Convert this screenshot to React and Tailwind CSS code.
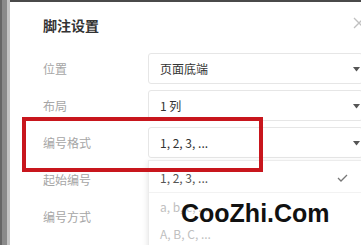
const ROWS = [
  { label: '位置', value: '页面底端' },
  { label: '布局', value: '1 列' },
  { label: '编号格式', value: '1, 2, 3, ...' },
]

function Caret() {
  return (
    <svg width="7" height="5" viewBox="0 0 7 5" className="absolute left-[204px] top-[13px]">
      <path d="M0 0 L7 0 L3.5 4.5 Z" fill="#555" />
    </svg>
  )
}

export default function App() {
  return (
    <div
      className="relative w-[361px] h-[245px] overflow-hidden bg-white flex"
      style={{ fontFamily: '"Noto Sans CJK SC", "Noto Sans", sans-serif' }}
    >
      <div className="flex h-full flex-shrink-0">
        <div className="w-[2px] bg-[#666]" />
        <div className="w-[5px] bg-[#8a8a8a]" />
        <div className="w-[3px] bg-[#c4c4c4]" />
      </div>

      <div className="flex-1 relative">
        <div className="h-[2px] bg-[#4a4a4a]" />
        <div className="pl-[33px] pt-[14px]">
          <p className="text-[14px] font-semibold text-[#333] leading-[18px]">脚注设置</p>

          <div className="mt-[19px] flex flex-col gap-[6px]">
            {ROWS.map(r => (
              <div key={r.label} className="flex items-center h-[31px]">
                <span className="w-[105px] text-[12px] text-[#a6a6a6]">{r.label}</span>
                <div className="relative w-[215px] h-[31px] border border-[#e6e6e6] rounded-[3px] flex items-center pl-[11px] text-[12px] text-[#333]">
                  {r.value}
                  <Caret />
                </div>
              </div>
            ))}
            <div className="flex items-center h-[31px]">
              <span className="text-[12px] text-[#a6a6a6]">起始编号</span>
            </div>
            <div className="flex items-center h-[31px]">
              <span className="text-[12px] text-[#a6a6a6]">编号方式</span>
            </div>
          </div>
        </div>

        <svg width="12" height="12" viewBox="0 0 12 12" className="absolute left-[343px] top-[17px]">
          <path d="M1 1 L11 11 M11 1 L1 11" stroke="#c0c0c0" strokeWidth="1.3" />
        </svg>

        <div className="absolute left-[138px] top-[160px] w-[225px] h-[90px] bg-white border border-[#ececec] shadow-[0_2px_6px_rgba(0,0,0,0.12)] text-[12px]">
          <div className="h-[32px] pt-[3px] flex items-center pl-[11px] pr-[24px] justify-between text-[#555] border-b border-[#f2f2f2]">
            <span>1, 2, 3, ...</span>
            <svg width="11" height="8" viewBox="0 0 11 8">
              <path d="M1 4 L4 7 L10 1" fill="none" stroke="#777" strokeWidth="1.3" />
            </svg>
          </div>
          <div className="h-[27px] flex items-center pl-[11px] text-[#c0c0c0]">a, b, c, ...</div>
          <div className="h-[27px] flex items-center pl-[11px] text-[#c0c0c0]">A, B, C, ...</div>
          <div className="absolute right-[2px] top-[4px] w-[4px] h-[52px] rounded bg-[#c2c2c2]" />
        </div>

        <div className="absolute left-[12px] top-[117px] w-[241px] h-[55px] border-[4px] border-[#c8161d]" />

        <div
          className="absolute left-[171px] top-[201px] text-[25px] font-bold text-[#111] leading-none"
          style={{ fontFamily: '"Liberation Sans", Arial, sans-serif' }}
        >
          CooZhi.Com
        </div>
      </div>
    </div>
  )
}
